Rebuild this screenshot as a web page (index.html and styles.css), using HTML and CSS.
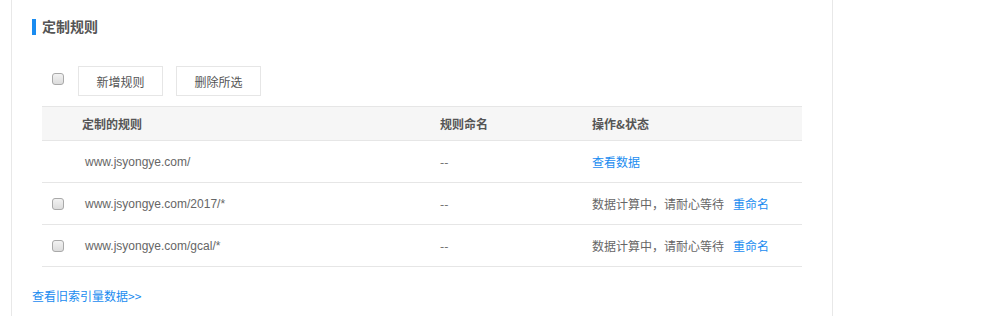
FILE: index.html
```html
<!DOCTYPE html>
<html lang="zh-CN">
<head>
  <meta charset="UTF-8">
  <title>定制规则</title>
  <link rel="stylesheet" href="styles.css">
</head>
<body>
  <div class="panel">
    <h3 class="title">定制规则</h3>
    <div class="toolbar">
      <span class="chk"><input type="checkbox"></span>
      <button class="btn">新增规则</button>
      <button class="btn">删除所选</button>
    </div>
    <table class="rules">
      <thead>
        <tr>
          <th class="col-chk"></th>
          <th class="col-rule">定制的规则</th>
          <th class="col-name">规则命名</th>
          <th class="col-op">操作&amp;状态</th>
        </tr>
      </thead>
      <tbody>
        <tr>
          <td class="col-chk"></td>
          <td class="col-rule url">www.jsyongye.com/</td>
          <td class="col-name">--</td>
          <td class="col-op"><a href="#">查看数据</a></td>
        </tr>
        <tr>
          <td class="col-chk"><input type="checkbox"></td>
          <td class="col-rule url">www.jsyongye.com/2017/*</td>
          <td class="col-name">--</td>
          <td class="col-op">数据计算中，请耐心等待<a class="rename" href="#">重命名</a></td>
        </tr>
        <tr>
          <td class="col-chk"><input type="checkbox"></td>
          <td class="col-rule url">www.jsyongye.com/gcal/*</td>
          <td class="col-name">--</td>
          <td class="col-op">数据计算中，请耐心等待<a class="rename" href="#">重命名</a></td>
        </tr>
      </tbody>
    </table>
    <a class="old-link" href="#">查看旧索引量数据&gt;&gt;</a>
  </div>
</body>
</html>
```

FILE: styles.css
```css
body {
  margin: 0;
  background: #fff;
  font-family: "Liberation Sans", "Noto Sans CJK SC", sans-serif;
  font-size: 12px;
  color: #666;
}
.panel {
  margin-left: 11px;
  width: 822px;
  height: 316px;
  overflow: hidden;
  box-sizing: border-box;
  padding: 19px 0 0 20px;
  border-left: 1px solid #e8e8e8;
  border-right: 1px solid #e8e8e8;
}
.title {
  margin: 0;
  height: 16px;
  line-height: 16px;
  font-size: 14px;
  font-weight: bold;
  color: #555;
  border-left: 4px solid #1a8cf0;
  padding-left: 6px;
}
.toolbar {
  display: flex;
  align-items: center;
  margin-top: 31px;
  padding-left: 20px;
  height: 30px;
}
input[type="checkbox"] {
  appearance: none;
  -webkit-appearance: none;
  width: 12px;
  height: 12px;
  margin: 0;
  border: 1px solid #a9a9a9;
  border-radius: 3px;
  background: linear-gradient(#f2f2f2, #dcdcdc);
  box-sizing: border-box;
  vertical-align: middle;
}
.chk {
  display: flex;
  width: 26px;
  margin-top: -4px;
}
.btn {
  width: 85px;
  height: 30px;
  margin-right: 13px;
  border: 1px solid #e6e6e6;
  background: #fff;
  color: #555;
  font-family: "Noto Sans CJK SC", sans-serif;
  font-size: 12px;
  padding: 0;
}
.rules {
  margin-top: 10px;
  margin-left: 10px;
  width: 760px;
  table-layout: fixed;
  border-collapse: collapse;
}
.rules th {
  height: 33px;
  background: #f6f6f6;
  border-top: 1px solid #e6e6e6;
  border-bottom: 1px solid #e6e6e6;
  text-align: left;
  font-weight: bold;
  color: #555;
  font-family: "Noto Sans CJK SC", sans-serif;
  padding: 0;
}
.rules td {
  height: 41px;
  border-bottom: 1px solid #e6e6e6;
  padding: 0;
  font-family: "Noto Sans CJK SC", sans-serif;
  color: #666;
}
.rules td.url {
  font-family: "Liberation Sans", sans-serif;
  padding-left: 3px;
}
.col-chk {
  width: 40px;
}
.rules td.col-chk input {
  margin-left: 10px;
  margin-top: -4px;
}
.col-rule {
  width: 358px;
}
.col-name {
  width: 152px;
}
.rules a {
  color: #1a8cf0;
  text-decoration: none;
}
.rules .rename {
  margin-left: 9px;
}
.old-link {
  display: inline-block;
  margin-top: 20px;
  color: #1a8cf0;
  text-decoration: none;
  font-family: "Noto Sans CJK SC", sans-serif;
}
```
